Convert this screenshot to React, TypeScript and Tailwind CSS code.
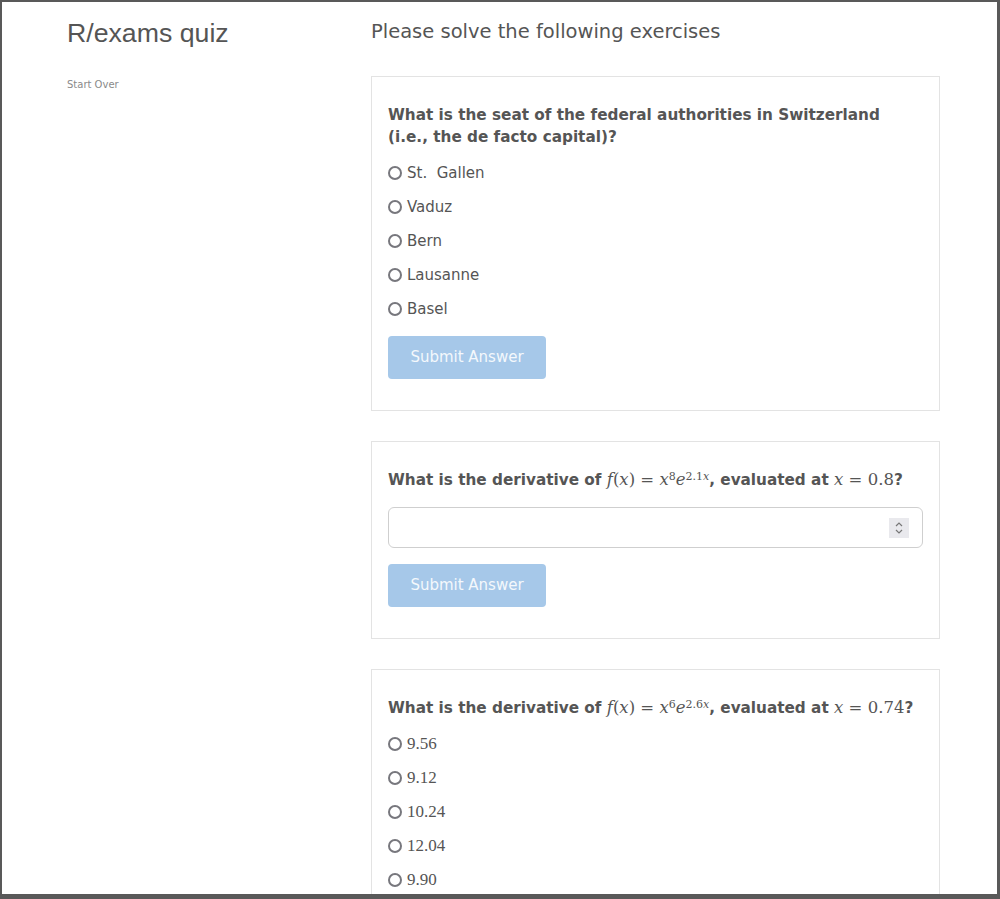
import React from 'react';

const Radio: React.FC = () => (
  <span className="inline-block w-[14px] h-[14px] rounded-full border-2 border-[#77777d] bg-white shrink-0" />
);

const SubmitButton: React.FC = () => (
  <button
    disabled
    className="bg-[#a6c8e9] text-[#f4f8fc] text-[15px] w-[158px] h-[43px] rounded-[4px]"
  >
    Submit Answer
  </button>
);

const M: React.FC<{ children: React.ReactNode }> = ({ children }) => (
  <span className="font-normal text-[16.5px] leading-none" style={{ fontFamily: '"DejaVu Serif", "Liberation Serif", serif' }}>
    {children}
  </span>
);

const Deriv: React.FC<{ p: string; k: string; at: string }> = ({ p, k, at }) => (
  <p className="font-bold text-[15.25px] leading-[22px] text-[#555]">
    What is the derivative of{' '}
    <M>
      <i>f</i>(<i>x</i>) = <i>x</i>
      <sup className="text-[11px] leading-none">{p}</sup>
      <i>e</i>
      <sup className="text-[11px] leading-none">
        {k}
        <i>x</i>
      </sup>
    </M>
    , evaluated at{' '}
    <M>
      <i>x</i> = {at}
    </M>
    ?
  </p>
);

const Card: React.FC<{ children: React.ReactNode }> = ({ children }) => (
  <div className="border border-[#e3e3e3] px-4 pt-[27px] pb-[31px]">{children}</div>
);

const Options: React.FC<{ items: string[]; serif?: boolean }> = ({ items, serif }) => (
  <div className="mt-[13px] flex flex-col gap-[10px]">
    {items.map((o) => (
      <label key={o} className="flex items-center gap-[5px] h-6 text-[#555]">
        <Radio />
        {serif ? (
          <span className="text-[17px]" style={{ fontFamily: '"Liberation Serif", serif' }}>
            {o}
          </span>
        ) : (
          <span className="text-[15px] whitespace-pre">{o}</span>
        )}
      </label>
    ))}
  </div>
);

export default function App() {
  return (
    <div
      className="h-[899px] overflow-hidden bg-white border-l-2 border-t-2 border-r-[3px] border-b-[5px] border-[#595959]"
      style={{ fontFamily: '"DejaVu Sans", sans-serif' }}
    >
      <div className="flex pl-[65px]">
        <div className="w-[304px] shrink-0">
          <h1 className="text-[26.7px] text-[#555] pt-[14px] leading-[34px]" style={{ fontFamily: '"Liberation Sans", sans-serif' }}>
            R/exams quiz
          </h1>
          <a className="block mt-[27px] text-[10px] text-[#8a8a8a]">Start Over</a>
        </div>
        <div className="w-[569px] shrink-0">
          <h2 className="text-[19.5px] text-[#555] pt-[17px] leading-[26px]">Please solve the following exercises</h2>
          <div className="mt-[31px] flex flex-col gap-[30px]">
            <Card>
              <p className="font-bold text-[15.25px] leading-[22px] text-[#555]">
                What is the seat of the federal authorities in Switzerland (i.e., the de facto capital)?
              </p>
              <Options items={['St.  Gallen', 'Vaduz', 'Bern', 'Lausanne', 'Basel']} />
              <div className="mt-[15px]">
                <SubmitButton />
              </div>
            </Card>
            <Card>
              <Deriv p="8" k="2.1" at="0.8" />
              <div className="relative mt-[16px] h-[41px] border border-[#cfcfcf] rounded-[6px]">
                <div className="absolute right-[13px] top-[10px] w-[20px] h-[20px] bg-[#e9e9ed] flex items-center justify-center">
                  <svg width="10" height="14" viewBox="0 0 10 14" fill="none" stroke="#777" strokeWidth="1.2">
                    <path d="M2 5 L5 2 L8 5" />
                    <path d="M2 9 L5 12 L8 9" />
                  </svg>
                </div>
              </div>
              <div className="mt-[16px]">
                <SubmitButton />
              </div>
            </Card>
            <Card>
              <Deriv p="6" k="2.6" at="0.74" />
              <Options serif items={['9.56', '9.12', '10.24', '12.04', '9.90']} />
            </Card>
          </div>
        </div>
      </div>
    </div>
  );
}
